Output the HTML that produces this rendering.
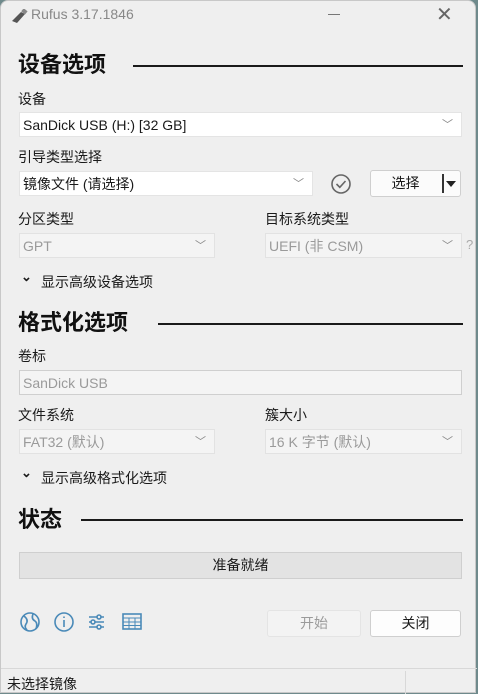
<!DOCTYPE html>
<html><head><meta charset="utf-8"><style>
*{margin:0;padding:0;box-sizing:border-box}
body{width:478px;height:693px;overflow:hidden;background:#6f8a8c;font-family:"Liberation Sans","Noto Sans CJK SC",sans-serif;color:#1a1a1a;font-size:14px}
#w{position:absolute;left:0;top:0;width:476px;height:693px;background:#efefef;border-radius:8px 8px 0 0;border:1px solid #c8c8c8}
.a{position:absolute;white-space:nowrap}
.h{font-size:22px;font-weight:bold;color:#111}
.line{position:absolute;height:2px;background:#1a1a1a}
.box{position:absolute;background:#fff;height:25px;padding-left:3px;line-height:25px;font-size:14px}
.dis{background:#f4f4f4;color:#9a9a9a;border:1px solid #e2e2e2}
.chev{position:absolute;right:8px;top:0;color:#888;font-size:11px}
.btn{position:absolute;background:#fbfbfb;border:1px solid #cfcfcf;border-radius:3px;text-align:center;line-height:25px}
</style></head><body><div id="w">
<svg class="a" style="left:9px;top:8px" width="18" height="14" viewBox="0 0 18 14"><path d="M2 12 L11 3 L15 5 L7 14 Z" fill="#555"/><rect x="12" y="0" width="5" height="4" fill="#888" transform="rotate(40 14 2)"/></svg>
<div class="a" style="left:30px;top:5px;font-size:14px;color:#888">Rufus 3.17.1846</div>
<div class="a" style="left:327px;top:13px;width:12px;height:1px;background:#777"></div>
<div class="a" style="left:435px;top:1px;font-size:20px;color:#666">✕</div>

<div class="a h" style="left:17px;top:46px">设备选项</div>
<div class="line" style="left:132px;top:64px;width:330px"></div>
<div class="a" style="left:17px;top:88px">设备</div>
<div class="box" style="left:18px;top:111px;width:443px;border:1px solid #e4e4e4">SanDick USB (H:) [32 GB]<span class="chev">﹀</span></div>
<div class="a" style="left:17px;top:146px">引导类型选择</div>
<div class="box" style="left:18px;top:170px;width:294px;border:1px solid #e4e4e4">镜像文件 (请选择)<span class="chev">﹀</span></div>
<svg class="a" style="left:329px;top:172px" width="22" height="22" viewBox="0 0 22 22"><circle cx="11" cy="11" r="9" fill="none" stroke="#666" stroke-width="1.6"/><path d="M6.5 11 L9.8 14.3 L15.5 8" fill="none" stroke="#666" stroke-width="1.6"/></svg>
<div class="btn" style="left:369px;top:169px;width:91px;height:27px;padding-right:20px">选择</div>
<div class="a" style="left:441px;top:173px;width:2px;height:19px;background:#333"></div>
<div class="a" style="left:445px;top:180px;border:5px solid transparent;border-top:6px solid #222"></div>

<div class="a" style="left:17px;top:208px">分区类型</div>
<div class="a" style="left:264px;top:208px">目标系统类型</div>
<div class="box dis" style="left:18px;top:232px;width:196px">GPT<span class="chev">﹀</span></div>
<div class="box dis" style="left:264px;top:232px;width:197px">UEFI (非 CSM)<span class="chev">﹀</span></div>
<div class="a" style="left:465px;top:236px;color:#aaa;font-size:13px">?</div>
<div class="a" style="left:20px;top:268px;font-size:13px;font-weight:bold">⌄</div>
<div class="a" style="left:40px;top:271px">显示高级设备选项</div>

<div class="a h" style="left:17px;top:304px">格式化选项</div>
<div class="line" style="left:157px;top:322px;width:305px"></div>
<div class="a" style="left:17px;top:345px">卷标</div>
<div class="box dis" style="left:18px;top:369px;width:443px;border-color:#cfcfcf">SanDick USB</div>
<div class="a" style="left:17px;top:404px">文件系统</div>
<div class="a" style="left:264px;top:404px">簇大小</div>
<div class="box dis" style="left:18px;top:428px;width:196px">FAT32 (默认)<span class="chev">﹀</span></div>
<div class="box dis" style="left:264px;top:428px;width:197px">16 K 字节 (默认)<span class="chev">﹀</span></div>
<div class="a" style="left:20px;top:464px;font-size:13px;font-weight:bold">⌄</div>
<div class="a" style="left:40px;top:467px">显示高级格式化选项</div>

<div class="a h" style="left:17px;top:501px">状态</div>
<div class="line" style="left:80px;top:518px;width:382px"></div>
<div class="a" style="left:18px;top:551px;width:443px;height:27px;background:#e3e3e3;border:1px solid #cfcfcf;text-align:center;line-height:25px">准备就绪</div>

<svg class="a" style="left:18px;top:610px" width="125" height="22" viewBox="0 0 125 22"><g fill="none" stroke="#4a8ab8" stroke-width="1.6"><circle cx="11" cy="11" r="9"/><path d="M5 5 Q10 9 7 13 Q5 16 8 19 M14 3 Q12 8 16 10 Q19 12 17 18"/><circle cx="45" cy="11" r="9"/><path d="M45 9 V16 M45 5.5 V7"/><path d="M70 6 H85 M70 11 H85 M70 16 H85"/><circle cx="80" cy="6" r="2" fill="#efefef"/><circle cx="74" cy="11" r="2" fill="#efefef"/><circle cx="80" cy="16" r="2" fill="#efefef"/><rect x="104" y="3" width="18" height="15"/><path d="M104 7 H122 M104 11 H122 M104 14.5 H122 M110 7 V18 M116 7 V18" stroke-width="1"/></g></svg>
<div class="btn" style="left:266px;top:609px;width:94px;height:27px;background:#f3f3f3;border-color:#e4e4e4;color:#9a9a9a">开始</div>
<div class="btn" style="left:369px;top:609px;width:91px;height:27px;background:#fdfdfd">关闭</div>

<div class="a" style="left:0;top:667px;width:476px;height:1px;background:#d8d8d8"></div>
<div class="a" style="left:404px;top:670px;width:1px;height:23px;background:#d8d8d8"></div>
<div class="a" style="left:6px;top:673px">未选择镜像</div>
</div></body></html>
